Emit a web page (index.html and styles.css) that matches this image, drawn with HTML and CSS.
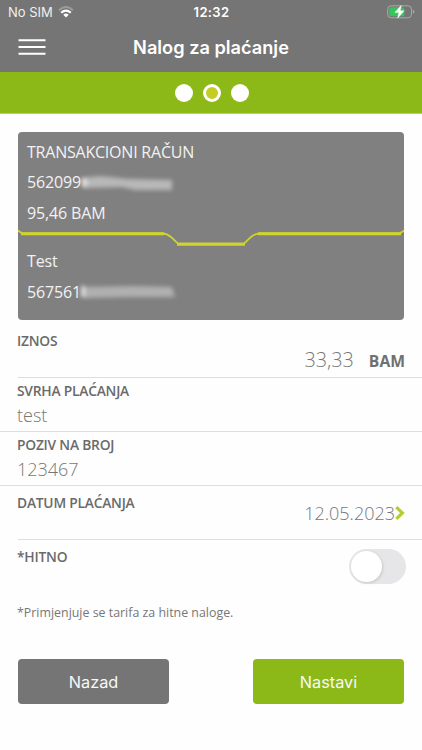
FILE: index.html
```html
<!DOCTYPE html>
<html lang="bs">
<head>
<meta charset="utf-8">
<meta name="viewport" content="width=device-width, initial-scale=1">
<title>Nalog za plaćanje</title>
<link rel="stylesheet" href="styles.css">
</head>
<body>
<header class="top">
  <div class="status">
    <div class="carrier"><span class="sim">No SIM</span>
      <svg class="wifi" width="16" height="12" viewBox="0 0 16 12" fill="none">
        <path d="M1 4.2Q8-2.2 15 4.2" stroke="#9a9a9a" stroke-width="2"/>
        <path d="M3.2 6.7Q8 2.4 12.8 6.7" stroke="#fff" stroke-width="2.2"/>
        <path d="M5.3 8.8Q8 6.4 10.7 8.8L8 11.6Z" fill="#fff"/>
      </svg>
    </div>
    <span class="time">12:32</span>
    <svg class="battery" width="28" height="14" viewBox="0 0 28 14">
      <rect x=".7" y=".8" width="23.8" height="12" rx="3.5" fill="none" stroke="#aaa" stroke-width="1"/>
      <path d="M26 4.8Q27.4 5.4 27.4 6.8T26 8.8Z" fill="#aaa"/>
      <rect x="2.3" y="2.3" width="15" height="9" rx="2" fill="#33c85a"/>
      <path d="M14.3 .3 7.8 7.6H11.8L10.6 13.2 17.2 5.8H13.2Z" fill="#fff" stroke="#fff" stroke-width=".4"/>
    </svg>
  </div>
  <div class="nav">
    <svg class="menu" width="28" height="17" viewBox="0 0 28 17"><path d="M.5 1.2H27.5M.5 8H27.5M.5 14.8H27.5" stroke="#fff" stroke-width="2"/></svg>
    <h1 class="title">Nalog za plaćanje</h1>
  </div>
</header>
<div class="steps"><i class="dot"></i><i class="dot current"></i><i class="dot"></i></div>
<main>
  <section class="card">
    <div class="line"><span class="account">TRANSAKCIONI RAČUN</span></div>
    <div class="line"><span>562099</span><svg class="smudge" width="104" height="26" viewBox="-4 -3 104 26">
      <path d="M2 5 20 3 48 6 92 7 92 17 55 17 42 14 4 15Z" fill="#b8b8b8"/>
      <path d="M1 5H7V14H2Z" fill="#e0e0e0"/></svg></div>
    <div class="line"><span>95,46 BAM</span></div>
    <svg class="divider" width="386" height="18" viewBox="0 0 386 18" fill="none" stroke="#d0d52d">
      <path d="M0 2.5 4 5.3H144Q149 5.5 153 9L160 15.6H226L233 9Q237 5.5 242 5.3H382L386 2.5" stroke-width="1.7"/>
      <path d="M3 5.7H146M159 16.3H227M240 5.7H383" stroke-width="3"/>
    </svg>
    <div class="line recipient"><span>Test</span></div>
    <div class="line"><span>567561</span><svg class="smudge" width="104" height="26" viewBox="-4 -3 104 26">
      <path d="M2 5 55 4 92 5 95 15 45 15 4 16Z" fill="#b0b0b0"/>
      <path d="M1 4H5V15H1Z" fill="#e0e0e0"/></svg></div>
  </section>
  <section class="field amount">
    <span class="label">IZNOS</span>
    <div class="sum"><span class="value">33,33</span><b class="currency">BAM</b></div>
  </section>
  <section class="field stacked purpose"><span class="label">SVRHA PLAĆANJA</span><span class="value">test</span></section>
  <section class="field stacked reference"><span class="label">POZIV NA BROJ</span><span class="value">123467</span></section>
  <section class="field date">
    <span class="label">DATUM PLAĆANJA</span>
    <div class="pick"><span class="value">12.05.2023</span><svg width="10" height="14" viewBox="0 0 10 14"><path d="M1.3 1.2 7.4 7 1.3 12.8" fill="none" stroke="#b5cd31" stroke-width="3.2"/></svg></div>
  </section>
  <section class="field urgent"><span class="label">*HITNO</span><span class="toggle"><i class="knob"></i></span></section>
  <p class="note">*Primjenjuje se tarifa za hitne naloge.</p>
  <div class="actions"><button class="btn">Nazad</button><button class="btn primary">Nastavi</button></div>
</main>
</body>
</html>
```
FILE: styles.css
```css
* { box-sizing: border-box; }
body { margin: 0; background: #fefefe; font-family: "Open Sans", sans-serif; color: #666; }
span, h1, b { white-space: nowrap; }
.top { height: 72px; background: #757575; color: #fff; font-family: Inter, sans-serif; }
.status { height: 24px; display: grid; grid-template-columns: 1fr auto 1fr; align-items: center; padding: 0 7px 0 8px; }
.carrier { display: flex; align-items: center; gap: 5.5px; }
.sim { font-size: 13px; line-height: 24px; color: #f0f0f0; }
.time { font-size: 13px; font-weight: 600; letter-spacing: .35px; }
.battery { justify-self: end; }
.nav { height: 48px; display: grid; grid-template-columns: 1fr auto 1fr; align-items: center; padding: 0 18px 1px; }
.title { margin: 0; font-size: 18.2px; font-weight: 600; line-height: 47px; }
.steps { height: 42px; background: #8cb918; display: flex; justify-content: center; align-items: center; gap: 10px; padding-left: 1px; border-bottom: 1px solid #b6d36b; }
.dot { width: 18px; height: 18px; border-radius: 50%; background: #fff; }
.current { background: #c5cd25; border: 3px solid #fff; }
.card { margin: 18px 18px 0; height: 188px; background: #808080; border-radius: 4px; padding-top: 5px; color: #f2f2f2; font-size: 16px; letter-spacing: -.13px; overflow: hidden; }
.account { letter-spacing: -.22px; }
.line { height: 30.4px; line-height: 30.4px; padding-left: 9px; display: flex; align-items: center; }
.smudge { margin-left: -5px; filter: blur(2px); }
.divider { display: block; margin-top: 0; }
.recipient { margin-top: 0; }
.field { display: flex; justify-content: space-between; border-bottom: 1px solid #dedede; }
.label { font-size: 13.8px; font-weight: 600; line-height: 18px; letter-spacing: -.22px; color: #6a6a6a; }
.value { font-size: 19px; font-weight: 300; line-height: 26px; color: #777; }
.amount { height: 58px; margin-left: 18px; padding: 12px 17px 0 0; }
.amount .label, .date .label, .urgent .label { margin-left: -1px; }
.sum { display: flex; align-items: baseline; gap: 15px; padding-top: 15px; }
.sum .value { font-size: 19.8px; }
.currency { font-size: 15.7px; line-height: 26px; color: #707070; }
.stacked { height: 54px; flex-direction: column; justify-content: flex-start; padding: 4px 17px 0; }
.stacked .value { font-size: 18px; line-height: 31px; }
.date { height: 54px; margin-left: 18px; padding: 8px 17px 0 0; }
.pick { display: flex; align-items: center; height: 38px; }
.pick .value { font-size: 18px; }
.urgent { height: 55px; margin-left: 18px; padding: 8px 16px 0 0; border: 0; }
.toggle { width: 57px; height: 35px; margin-top: 1px; padding: 2px; border-radius: 18px; background: #e6e6e8; display: flex; }
.knob { width: 31px; height: 31px; border-radius: 50%; background: #fff; box-shadow: 1px 1px 3px #0002; }
.note { margin: 9px 17px 0; font-size: 12.4px; line-height: 18px; color: #777; }
.actions { display: flex; justify-content: space-between; padding: 37px 18px 0; }
.btn { width: 151px; height: 45px; border: 0; border-radius: 4px; background: #757575; color: #f8f8f8; font: 16.3px Inter, sans-serif; }
.primary { background: #8cb918; }
```
